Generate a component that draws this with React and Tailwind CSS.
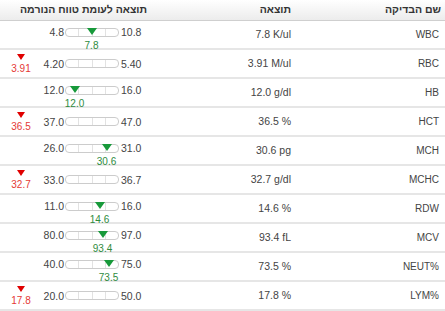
import React from 'react';

const rows = [
  { name: 'WBC', result: '7.8 K/ul', lo: '4.8', hi: '10.8', value: '7.8' },
  { name: 'RBC', result: '3.91 M/ul', lo: '4.20', hi: '5.40', value: '3.91' },
  { name: 'HB', result: '12.0 g/dl', lo: '12.0', hi: '16.0', value: '12.0' },
  { name: 'HCT', result: '36.5 %', lo: '37.0', hi: '47.0', value: '36.5' },
  { name: 'MCH', result: '30.6 pg', lo: '26.0', hi: '31.0', value: '30.6' },
  { name: 'MCHC', result: '32.7 g/dl', lo: '33.0', hi: '36.7', value: '32.7' },
  { name: 'RDW', result: '14.6 %', lo: '11.0', hi: '16.0', value: '14.6' },
  { name: 'MCV', result: '93.4 fL', lo: '80.0', hi: '97.0', value: '93.4' },
  { name: 'NEUT%', result: '73.5 %', lo: '40.0', hi: '75.0', value: '73.5' },
  { name: 'LYM%', result: '17.8 %', lo: '20.0', hi: '50.0', value: '17.8' },
];

const RangeCell = ({ lo, hi, value }) => {
  const v = parseFloat(value);
  const min = parseFloat(lo);
  const max = parseFloat(hi);
  const inRange = v >= min && v <= max;
  const pct = inRange ? (v - min) / (max - min) : 0;

  return (
    <div dir="ltr" className="flex items-center h-full pl-[11px]">
      {/* out of range marker */}
      <div className="w-[20px] flex flex-col items-center">
        {!inRange && (
          <>
            <div className="w-0 h-0 border-l-[4px] border-r-[4px] border-t-[6px] border-l-transparent border-r-transparent border-t-[#e00000]" />
            <div className="text-[10px] leading-[11px] text-[#e53935] mt-[3px]">{value}</div>
          </>
        )}
      </div>
      <div className={`flex flex-col ${inRange ? 'pb-[5px]' : ''}`}>
        <div className="flex items-center">
          <div className="w-[33px] text-right text-[10.5px] leading-[12px] text-[#444]">{lo}</div>
          <div className="relative w-[54px] h-[9px] ml-[1px] mr-[2px] border border-[#cccccc] rounded-[4px] bg-white flex">
            <div className="flex-1 border-r border-[#e2e2e2]" />
            <div className="flex-1 border-r border-[#e2e2e2]" />
            <div className="flex-1 border-r border-[#e2e2e2]" />
            <div className="flex-1" />
            {inRange && (
              <div
                className="absolute top-[-1px] w-[19px] flex flex-col items-center"
                style={{ left: Math.round(pct * 35) - 1 }}
              >
                <div className="w-0 h-0 border-l-[5px] border-r-[5px] border-t-[7px] border-l-transparent border-r-transparent border-t-[#17993a]" />
                <div className="mt-[5px] text-[10px] leading-[11px] text-[#2e8b3e]">{value}</div>
              </div>
            )}
          </div>
          <div className="text-[10.5px] leading-[12px] text-[#444]">{hi}</div>
        </div>
      </div>
    </div>
  );
};

export default function App() {
  return (
    <div dir="rtl" className="w-[445px] h-[311px] bg-white font-['Liberation_Sans',Arial,sans-serif] overflow-hidden">
      {/* Header */}
      <div className="grid grid-cols-[148px_148px_149px] h-[21px] border-b border-[#cfcfcf] bg-gradient-to-b from-white to-[#ececec] text-[10.5px] font-bold text-[#333]">
        <div className="flex items-center pr-[4px]">שם הבדיקה</div>
        <div className="flex items-center pr-[6px]">תוצאה</div>
        <div className="flex items-center pr-[2px]">תוצאה לעומת טווח הנורמה</div>
      </div>

      {rows.map((r) => (
        <div key={r.name} className="grid grid-cols-[148px_148px_149px] h-[29px] border-b-2 border-[#e6e6e6]">
          <div className="flex items-center pr-[6px] text-[10px] text-[#444]">
            <span dir="ltr">{r.name}</span>
          </div>
          <div className="flex items-center pr-[6px] text-[10.5px] text-[#444]">
            <span dir="ltr">{r.result}</span>
          </div>
          <RangeCell lo={r.lo} hi={r.hi} value={r.value} />
        </div>
      ))}
    </div>
  );
}
